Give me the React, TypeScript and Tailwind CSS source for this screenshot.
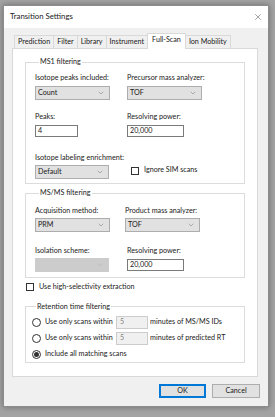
import { X, ChevronDown } from 'lucide-react'

const tabs = ['Prediction', 'Filter', 'Library', 'Instrument', 'Full-Scan', 'Ion Mobility']

function Combo({ value, width, disabled }: { value?: string; width: string; disabled?: boolean }) {
  return (
    <div
      className={`flex h-[14px] items-center justify-between border pl-[2px] pr-[4px] ${width} ${
        disabled ? 'border-[#cccccc] bg-[#cccccc] text-[#999]' : 'border-[#adadad] bg-[#e1e1e1]'
      }`}
    >
      <span>{value}</span>
      <ChevronDown size={8} strokeWidth={1.2} className={disabled ? 'text-[#a8a8a8]' : 'text-[#555]'} />
    </div>
  )
}

function TextBox({ value, width }: { value: string; width: string }) {
  return (
    <div className={`flex h-[12px] items-center border border-[#7a7a7a] bg-white pl-[2px] ${width}`}>
      {value}
    </div>
  )
}

function Check({ label }: { label: string }) {
  return (
    <div className="flex items-center gap-[5px] whitespace-nowrap">
      <span className="h-[8px] w-[8px] shrink-0 border border-[#333] bg-white" />
      <span>{label}</span>
    </div>
  )
}

function Radio({ checked, children }: { checked?: boolean; children: React.ReactNode }) {
  return (
    <div className="flex h-[16px] items-center whitespace-nowrap">
      <span className="mr-[4px] flex h-[9px] w-[9px] shrink-0 items-center justify-center rounded-full border border-[#333] bg-white">
        {checked && <span className="h-[5px] w-[5px] rounded-full bg-[#333]" />}
      </span>
      {children}
    </div>
  )
}

function Group({ title, className, children }: { title: string; className: string; children: React.ReactNode }) {
  return (
    <fieldset className={`mx-[12px] border border-[#dcdcdc] ${className}`}>
      <legend className="ml-[4px] px-[1px] leading-[10px]">{title}</legend>
      {children}
    </fieldset>
  )
}

function Field({ label, width, gap, children }: { label: string; width: string; gap: string; children: React.ReactNode }) {
  return (
    <div className={`shrink-0 ${width}`}>
      <div className="leading-[10px]">{label}</div>
      <div className={gap}>{children}</div>
    </div>
  )
}

export default function App() {
  return (
    <div className="h-[417px] w-[275px] whitespace-nowrap bg-[#a3a3a3] pl-[3px] pt-[5px] font-['Lato',sans-serif] text-[7.2px] text-[#1a1a1a]">
      <div className="flex h-[402px] w-[266px] flex-col border border-[#8c8c8c] bg-[#f0f0f0] shadow-[0_0_6px_rgba(0,0,0,0.35)]">
        <div className="flex h-[22px] items-center justify-between bg-white pl-[6px] pr-[5px]">
          <span className="text-[7.8px]">Transition Settings</span>
          <X size={10} strokeWidth={1} className="text-[#222]" />
        </div>

        <div className="mt-[5px] flex h-[15px] items-end pl-[10px]">
          {tabs.map((t) =>
            t === 'Full-Scan' ? (
              <div key={t} className="relative z-10 -mb-px -mr-px flex h-[16px] items-center border border-b-0 border-[#d9d9d9] bg-white px-[4px] pb-[2px]">
                {t}
              </div>
            ) : (
              <div key={t} className="-mr-px flex h-[13px] items-center border border-b-0 border-[#d9d9d9] bg-[#f0f0f0] px-[3px]">
                {t}
              </div>
            )
          )}
        </div>

        <div className="ml-[8px] h-[329px] w-[246px] border border-[#d9d9d9] bg-white pt-[8px]">
          <Group title="MS1 filtering" className="h-[127px] pl-[9px]">
            <div className="mt-[6px] flex">
              <Field label="Isotope peaks included:" width="w-[92px]" gap="mt-[3px]">
                <Combo value="Count" width="w-[75px]" />
              </Field>
              <Field label="Precursor mass analyzer:" width="w-[80px]" gap="mt-[3px]">
                <Combo value="TOF" width="w-[75px]" />
              </Field>
            </div>
            <div className="mt-[12px] flex">
              <Field label="Peaks:" width="w-[92px]" gap="mt-[3px]">
                <TextBox value="4" width="w-[43px]" />
              </Field>
              <Field label="Resolving power:" width="w-[80px]" gap="mt-[3px]">
                <TextBox value="20,000" width="w-[57px]" />
              </Field>
            </div>
            <div className="mt-[16px] flex items-end">
              <Field label="Isotope labeling enrichment:" width="w-[96px]" gap="mt-[2px]">
                <Combo value="Default" width="w-[74px]" />
              </Field>
              <div className="mb-[3px]">
                <Check label="Ignore SIM scans" />
              </div>
            </div>
          </Group>

          <Group title="MS/MS filtering" className="mt-[4px] h-[90px] pl-[9px]">
            <div className="mt-[8px] flex">
              <Field label="Acquisition method:" width="w-[90px]" gap="mt-[2px]">
                <Combo value="PRM" width="w-[75px]" />
              </Field>
              <Field label="Product mass analyzer:" width="w-[80px]" gap="mt-[2px]">
                <Combo value="TOF" width="w-[75px]" />
              </Field>
            </div>
            <div className="mt-[14px] flex">
              <Field label="Isolation scheme:" width="w-[92px]" gap="mt-[2px]">
                <Combo width="w-[74px]" disabled />
              </Field>
              <Field label="Resolving power:" width="w-[80px]" gap="mt-[3px]">
                <TextBox value="20,000" width="w-[57px]" />
              </Field>
            </div>
          </Group>

          <div className="ml-[13px] mt-[4px]">
            <Check label="Use high-selectivity extraction" />
          </div>

          <Group title="Retention time filtering" className="mt-[9px] h-[61px] pl-[6px]">
            <div className="mt-[3px]">
              <Radio>
                <span className="w-[71px] shrink-0">Use only scans within</span>
                <div className="flex h-[13px] w-[32px] shrink-0 items-center border border-[#cccccc] bg-[#f0f0f0] pl-[3px] text-[#888]">5</div>
                <span className="ml-[2px]">minutes of MS/MS IDs</span>
              </Radio>
              <Radio>
                <span className="w-[71px] shrink-0">Use only scans within</span>
                <div className="flex h-[13px] w-[32px] shrink-0 items-center border border-[#cccccc] bg-[#f0f0f0] pl-[3px] text-[#888]">5</div>
                <span className="ml-[2px]">minutes of predicted RT</span>
              </Radio>
              <Radio checked>
                <span>Include all matching scans</span>
              </Radio>
            </div>
          </Group>
        </div>

        <div className="mt-[7px] flex justify-end gap-[6px] pr-[8px]">
          <button className="h-[14px] w-[47px] border border-[#0078d7] bg-[#e1e1e1] shadow-[inset_0_0_0_1px_#0078d7]">OK</button>
          <button className="h-[14px] w-[48px] border border-[#adadad] bg-[#e1e1e1]">Cancel</button>
        </div>
      </div>
    </div>
  )
}
